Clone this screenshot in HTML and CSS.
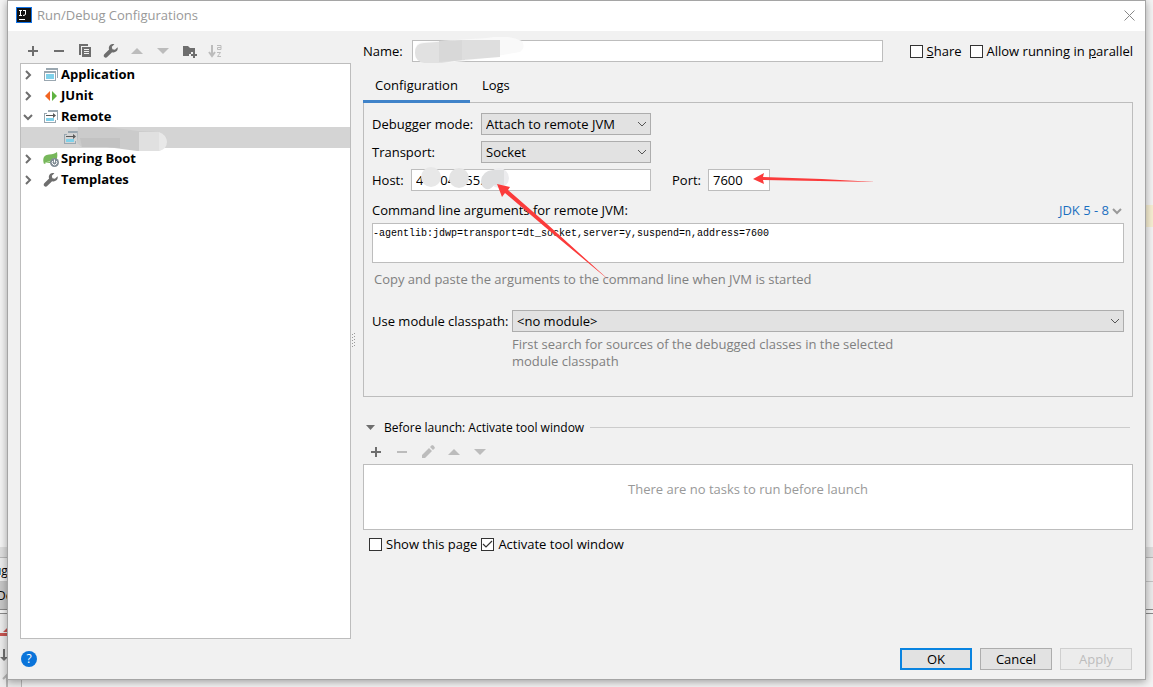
FILE: index.html
```html
<!DOCTYPE html>
<html lang="en">
<head>
  <meta charset="UTF-8">
  <meta name="viewport" content="width=device-width, initial-scale=1.0">
  <title>Run/Debug Configurations</title>
  <link rel="stylesheet" href="styles.css">
</head>
<body>
  <!-- shared icons -->
  <svg class="sprite" aria-hidden="true">
    <symbol id="i-plus" viewBox="0 0 16 16"><path d="M7 3h2v4h4v2H9v4H7V9H3V7h4z" fill="currentColor"/></symbol>
    <symbol id="i-minus" viewBox="0 0 16 16"><path d="M3 7h10v2H3z" fill="currentColor"/></symbol>
    <symbol id="i-up" viewBox="0 0 16 16"><path d="M2 11l6-6 6 6z" fill="currentColor"/></symbol>
    <symbol id="i-down" viewBox="0 0 16 16"><path d="M2 5h12l-6 6z" fill="currentColor"/></symbol>
    <symbol id="i-wrench" viewBox="0 0 16 16"><path d="M14.6 4.2l-2.7 2.6-2.5-.6-.6-2.4 2.6-2.6c-1.700-.6-3.700-.1-4.700 1.200-1 1.200-1.100 2.700-.6 4L1.300 11.200c-.8.8-.8 2.100 0 2.900s2.100.8 2.900 0l4.900-4.900c1.500.5 3.100.2 4.300-.9 1.200-1.100 1.600-2.700 1.200-4.100z" fill="currentColor"/></symbol>
    <symbol id="i-right" viewBox="0 0 10 10"><path d="M3 1l4 4-4 4" fill="none" stroke="currentColor" stroke-width="2"/></symbol>
    <symbol id="i-open" viewBox="0 0 10 10"><path d="M1 3l4 4 4-4" fill="none" stroke="currentColor" stroke-width="2"/></symbol>
    <symbol id="i-chevron" viewBox="0 0 10 10"><path d="M1 3l4 4 4-4" fill="none" stroke="currentColor" stroke-width="1"/></symbol>
    <symbol id="i-app" viewBox="0 0 16 16"><path d="M3 1h12v10h-1V3H3z" fill="#9aa7b0"/><path d="M1 4h12v10H1zm1 2v7h10V6z" fill="#9aa7b0" fill-rule="evenodd"/><path d="M3 7h8v5H3z" fill="#7fd1ea"/></symbol>
    <symbol id="i-remote" viewBox="0 0 16 16"><path d="M5 1h10v10h-1V3H5zM1 4h3v1H2v8h10v-2h1v3H1z" fill="#9aa7b0"/><path d="M3 9h8v3H3z" fill="#7fd1ea"/><path d="M3 6h7V4l3 2.500L10 9V7H3z" fill="#595959"/></symbol>
  </svg>

  <!-- editor window behind the dialog -->
  <div class="backdrop" aria-hidden="true">
    <div class="backdrop-editor"><div class="backdrop-line"></div></div>
    <div class="backdrop-split"></div>
    <div class="backdrop-tab">ug</div>
    <div class="backdrop-tab active">De</div>
    <div class="backdrop-rule"></div>
    <div class="backdrop-tools">
      <svg width="21" height="74" viewBox="0 0 21 74"><path d="M0 19h8v3H0zM3 18l5-5v5z" fill="#c75450"/><path d="M3 35h2v9H3zM0 43h8l-4 4z" fill="#6e6e6e"/><path d="M7 73V61m-4 4l4-4 4 4" stroke="#b5b5b5" stroke-width="2" fill="none"/></svg>
    </div>
  </div>

  <main class="dialog">
    <header class="titlebar">
      <svg width="16" height="16" viewBox="0 0 16 16"><path d="M0 0h16v16H0z" fill="#1374e8"/><path d="M1 1h14v14H1z" fill="#111"/><path d="M3 3.500h3M4.500 3v5M3 8.500h3M7 3.500h3M9.500 3v4q0 1.500-2.500 1.500" fill="none" stroke="#fff" stroke-width="1"/><path d="M3 12h6v1H3z" fill="#fff"/></svg>
      <h1>Run/Debug Configurations</h1>
      <button class="close" aria-label="Close"><svg width="11" height="11" viewBox="0 0 11 11"><path d="M.5.5l10 10m0-10l-10 10" stroke="#888" fill="none"/></svg></button>
    </header>

    <div class="content">
      <aside class="sidebar">
        <div class="toolbar">
          <button aria-label="Add"><svg><use href="#i-plus"/></svg></button>
          <button aria-label="Remove"><svg><use href="#i-minus"/></svg></button>
          <button aria-label="Copy"><svg viewBox="0 0 16 16"><path d="M2 1h9v2H4v9H2z" fill="#6e6e6e"/><path d="M5 4h9v10H5zm2 2v1h5V6zm0 2v1h5V8zm0 2v1h5v-1z" fill="#6e6e6e" fill-rule="evenodd"/></svg></button>
          <button aria-label="Edit templates"><svg><use href="#i-wrench"/></svg></button>
          <button aria-label="Move up" disabled><svg><use href="#i-up"/></svg></button>
          <button aria-label="Move down" disabled><svg><use href="#i-down"/></svg></button>
          <button aria-label="New folder"><svg viewBox="0 0 16 16"><path d="M2 3h5l2 2h5v4h-4v2H8v2H2z" fill="#6e6e6e"/><path d="M12 9h2v2h2v2h-2v2h-2v-2h-2v-2h2z" fill="#6e6e6e"/></svg></button>
          <button aria-label="Sort" disabled><svg viewBox="0 0 16 16"><path d="M5 2v10M2 9l3 4 3-4" stroke="currentColor" stroke-width="2" fill="none"/><path d="M10 2.500h4v4h-3.500V4.500H14M10 9.500h3.500l-3 4H14" stroke="currentColor" fill="none"/></svg></button>
        </div>
        <ul class="tree">
          <li><button class="toggle" aria-label="Expand Application"><svg><use href="#i-right"/></svg></button><svg class="icon"><use href="#i-app"/></svg>Application</li>
          <li><button class="toggle" aria-label="Expand JUnit"><svg><use href="#i-right"/></svg></button><svg class="icon" viewBox="0 0 16 16"><path d="M7 3v10L2 8z" fill="#f26522"/><path d="M9 3v10l5-5z" fill="#5fb341"/></svg>JUnit</li>
          <li><button class="toggle" aria-label="Collapse Remote"><svg><use href="#i-open"/></svg></button><svg class="icon"><use href="#i-remote"/></svg>Remote</li>
          <li class="child selected">
            <svg class="icon"><use href="#i-remote"/></svg>
            <svg class="smudge" width="92" height="25" viewBox="0 0 92 25"><path d="M0 16L1 0h30l30 4 21 1q9 4 8 10t-8 9H60L30 20H5z" fill="#cbcbcb"/><path d="M3 11h40v10L30 20H5z" fill="#c2c2c2"/><path d="M62 5h20v19H62z" fill="#e0e0e0"/><path d="M82 5q8 3 8 10t-8 9z" fill="#e8e8e8"/></svg>
          </li>
          <li><button class="toggle" aria-label="Expand Spring Boot"><svg><use href="#i-right"/></svg></button><svg class="icon" viewBox="0 0 16 16"><path d="M14 1c1 5 0 10-5 11H3l-2 1C-1 7 1 4 6 3.500c4-.2 6-1 8-2.500z" fill="#77b75b"/><path d="M2 12q6-1 9-5" stroke="#b8dda7" fill="none"/><circle cx="11.500" cy="11.500" r="4.500" fill="#7f8b94"/><path d="M11.500 8.500v3M9.800 10a2.300 2.300 0 1 0 3.400 0" stroke="#fff" fill="none"/></svg>Spring Boot</li>
          <li><button class="toggle" aria-label="Expand Templates"><svg><use href="#i-right"/></svg></button><svg class="icon"><use href="#i-wrench"/></svg>Templates</li>
        </ul>
      </aside>

      <div class="splitter">
        <svg width="5" height="15" viewBox="0 0 5 15"><path d="M1 2h1v1H1zM1 5h1v1H1zM1 8h1v1H1zM1 11h1v1H1zM1 14h1v1H1zM3 1h1v1H3zM3 4h1v1H3zM3 7h1v1H3zM3 10h1v1H3zM3 13h1v1H3z" fill="#999"/></svg>
      </div>

      <section class="editor">
        <div class="name-row">
          <label class="name-label" for="name">Name:</label>
          <div class="name-field">
            <input type="text" id="name">
            <svg class="smudge" width="114" height="27" viewBox="0 0 114 27"><path d="M3 15Q3 4 12 5L75 1q20-4 35 3 4 6-2 11l-23 4-31 5-24 2H15Q3 25 3 15z" fill="#f9f9f9"/><path d="M3 16Q3 6 12 6L50 3v20l-20 3H12Q3 24 3 16z" fill="#e1e1e1"/><path d="M27 4l26-1v20l-26 2z" fill="#d8d8d8"/><path d="M50 3h38v17l-38 3z" fill="#dedede"/></svg>
          </div>
          <label class="check"><input type="checkbox"><span><u>S</u>hare</span></label>
          <label class="check"><input type="checkbox"><span>Allow running in <u>p</u>arallel</span></label>
        </div>

        <nav class="tabs">
          <button class="tab active">Configuration</button>
          <button class="tab">Logs</button>
        </nav>

        <div class="panel">
          <div class="row">
            <label class="field-label" for="mode">Debugger mode:</label>
            <div class="select"><select id="mode"><option>Attach to remote JVM</option></select><svg><use href="#i-chevron"/></svg></div>
          </div>
          <div class="row">
            <label class="field-label" for="transport">Transport:</label>
            <div class="select"><select id="transport"><option>Socket</option></select><svg><use href="#i-chevron"/></svg></div>
          </div>
          <div class="row">
            <label class="host-label" for="host">Host:</label>
            <div class="host-field">
              <input type="text" id="host" value="4     04   55.">
              <svg class="smudge" width="100" height="26" viewBox="0 0 100 26"><circle cx="20" cy="11" r="10" fill="#e8e8e8"/><circle cx="48" cy="12" r="10" fill="#e4e4e4"/><circle cx="88" cy="12" r="10" fill="#ececee"/><path d="M70 15q1-10 12-11h11v15H83q-3 5-8 4-5-2-5-8z" fill="#dedfe0"/></svg>
            </div>
            <label class="port-label" for="port">Port:</label>
            <input class="port" type="text" id="port" value="7600">
          </div>
          <div class="args-head">
            <label for="args">Command line arguments for remote JVM:</label>
            <a href="#">JDK 5 - 8<svg><use href="#i-open"/></svg></a>
          </div>
          <textarea id="args" spellcheck="false">-agentlib:jdwp=transport=dt_socket,server=y,suspend=n,address=7600</textarea>
          <p class="hint">Copy and paste the arguments to the command line when JVM is started</p>
          <div class="module-row">
            <label for="module">Use module classpath:</label>
            <div class="select"><select id="module"><option>&lt;no module&gt;</option></select><svg><use href="#i-chevron"/></svg></div>
            <p class="hint">First search for sources of the debugged classes in the selected module classpath</p>
          </div>

          <!-- red pointers to the host and port fields -->
          <svg class="arrows" width="520" height="120" viewBox="0 0 520 120"><path d="M133 17l13 3-2 3 39 34 63 57-65-54-40-34-3 4z" fill="#fb3b3b"/><path d="M389 12l11-6-1 4 59 2 54 3-57-1-56-1 1 4z" fill="#fb3b3b"/></svg>
        </div>

        <div class="launch-head">
          <button class="fold" aria-label="Collapse"><svg viewBox="0 0 10 10"><path d="M0 2h9L4.500 7z" fill="#6e6e6e"/></svg></button>
          <h2>Before launch: Activate tool window</h2>
          <hr>
        </div>
        <div class="toolbar launch-tools">
          <button aria-label="Add task"><svg><use href="#i-plus"/></svg></button>
          <button aria-label="Remove task" disabled><svg><use href="#i-minus"/></svg></button>
          <button aria-label="Edit task" disabled><svg viewBox="0 0 16 16"><path d="M2 14v-3l7-7 3 3-7 7zM10 3l2-2q2 0 3 3l-2 2z" fill="currentColor"/></svg></button>
          <button aria-label="Move task up" disabled><svg><use href="#i-up"/></svg></button>
          <button aria-label="Move task down" disabled><svg><use href="#i-down"/></svg></button>
        </div>
        <div class="tasks">There are no tasks to run before launch</div>
        <div class="launch-options">
          <label class="check"><input type="checkbox"><span>Show this page</span></label>
          <label class="check"><input type="checkbox" checked><span>Activate tool window</span></label>
        </div>
      </section>
    </div>

    <footer class="footer">
      <button class="help" aria-label="Help">?</button>
      <button class="btn primary">OK</button>
      <button class="btn">Cancel</button>
      <button class="btn" disabled>Apply</button>
    </footer>
  </main>
</body>
</html>
```
FILE: styles.css
```css
* {
  margin: 0;
  padding: 0;
  box-sizing: border-box;
}

:root {
  --bg: #f1f1f1;
  --line: #bdbdbd;
  --icon: #6e6e6e;
  --icon-off: #bcbcbc;
  --blue: #0a84e0;
}

body {
  font-family: "Open Sans", "Noto Sans", sans-serif;
  font-size: 13px;
  line-height: 17px;
  color: #000;
  background: #f4f4f4;
  height: 100vh;
  padding: 0 7px 7px;
  overflow: hidden;
}

button,
input,
select,
textarea {
  font: inherit;
  color: inherit;
  border-radius: 0;
}

button {
  background: none;
  border: none;
}

.sprite {
  display: none;
}

/* window behind */
.backdrop {
  position: absolute;
  inset: 0;
  z-index: -1;
  display: flex;
  flex-direction: column;
  font-size: 12px;
  background: #f4f4f4;
}

.backdrop-editor {
  flex: 1;
  padding-top: 205px;
}

.backdrop-line {
  height: 22px;
  background: linear-gradient(to right, transparent 50%, #f7efd2 50%);
}

.backdrop-split {
  height: 11px;
  background: #dedede;
  border-bottom: 1px solid #b8b8b8;
}

.backdrop-tab {
  height: 24px;
  line-height: 26px;
  text-indent: -6px;
  background: #ececec;
  border-bottom: 1px solid #c4c4c4;
}

.backdrop-tab.active {
  height: 28px;
  line-height: 28px;
  text-indent: -3px;
  background: linear-gradient(to right, #c6c6c6 50%, #ececec 50%);
  border-bottom: 1px solid #8a8a8a;
}

.backdrop-rule {
  height: 4px;
  border-bottom: 1px solid #8a8a8a;
}

.backdrop-tools {
  width: 22px;
  height: 73px;
  background: #ececec;
  border-right: 1px solid #b8b8b8;
}

.dialog {
  height: 100%;
  display: flex;
  flex-direction: column;
  background: var(--bg);
  border: 1px solid #a5a5a5;
  box-shadow: 0 2px 8px rgba(0, 0, 0, 0.35);
}

.titlebar {
  height: 30px;
  display: flex;
  align-items: center;
  gap: 5px;
  padding: 0 10px 2px 8px;
  background: #fff;
}

.titlebar h1 {
  flex: 1;
  font-size: 13px;
  font-weight: 400;
  color: #999;
}

.titlebar svg,
.close svg {
  display: block;
}

.content {
  flex: 1;
  min-height: 0;
  display: flex;
  padding: 9px 12px 0;
}

/* left side */
.sidebar {
  width: 331px;
  display: flex;
  flex-direction: column;
}

.toolbar {
  display: flex;
  gap: 10px;
  height: 23px;
  padding: 3px 5px 0;
  color: var(--icon);
}

.toolbar button {
  width: 16px;
  height: 16px;
}

.toolbar button:disabled {
  color: var(--icon-off);
}

.toolbar svg {
  display: block;
  width: 16px;
  height: 16px;
}

.tree {
  flex: 1;
  list-style: none;
  font-weight: 700;
  background: #fff;
  border: 1px solid var(--line);
}

.tree li {
  position: relative;
  display: flex;
  align-items: center;
  height: 21px;
  padding-left: 2px;
}

.tree .child {
  padding-left: 42px;
}

.tree .selected {
  background: #d4d4d4;
}

.toggle,
.toggle svg {
  display: block;
  width: 10px;
  height: 10px;
  color: var(--icon);
}

.tree .icon {
  width: 16px;
  height: 16px;
  margin-right: 2px;
  color: var(--icon);
}

.toggle + .icon {
  margin-left: 10px;
}

.smudge {
  position: absolute;
  pointer-events: none;
}

.tree .smudge {
  left: 56px;
  top: 0;
}

.splitter {
  display: flex;
  align-items: center;
  width: 12px;
}

/* right side */
.editor {
  flex: 1;
  min-width: 0;
}

.name-row {
  display: flex;
  align-items: center;
}

.name-label {
  width: 49px;
}

input[type="text"] {
  display: block;
  width: 100%;
  height: 22px;
  padding: 0 4px;
  background: #fff;
  border: 1px solid var(--line);
}

.name-field {
  position: relative;
  flex: 1;
  margin-right: 27px;
}

.name-field .smudge {
  left: 0;
  top: -3px;
}

.check {
  display: flex;
  align-items: center;
  gap: 4px;
}

.check + .check {
  margin-left: 8px;
}

.check input {
  appearance: none;
  width: 13px;
  height: 13px;
  background: #fff;
  border: 1px solid #333;
}

.check input:checked {
  background: #fff url("data:image/svg+xml,%3Csvg xmlns='http://www.w3.org/2000/svg' viewBox='0 0 11 11'%3E%3Cpath d='M1 5l3 3 6-6' fill='none' stroke='%23333' stroke-width='1.2'/%3E%3C/svg%3E");
}

.tabs {
  position: relative;
  z-index: 1;
  display: flex;
  height: 41px;
  padding-top: 8px;
}

.tab {
  padding: 0 12px;
  border-bottom: 3px solid transparent;
}

.tab.active {
  border-color: #4083c9;
}

.panel {
  position: relative;
  height: 295px;
  margin-top: -1px;
  padding: 10px 8px;
  border: 1px solid var(--line);
}

.row {
  display: flex;
  align-items: center;
  margin-bottom: 6px;
}

.field-label {
  width: 109px;
}

.select {
  position: relative;
  width: 170px;
}

.select select {
  display: block;
  appearance: none;
  width: 100%;
  height: 22px;
  padding: 0 4px;
  background: #e2e2e2;
  border: 1px solid #adadad;
}

.select svg {
  position: absolute;
  right: 4px;
  top: 6px;
  width: 10px;
  height: 10px;
  color: #555;
  pointer-events: none;
}

.host-label {
  width: 39px;
}

.host-field {
  position: relative;
  width: 240px;
}

.host-field .smudge {
  left: 0;
  top: -3px;
}

.port-label {
  width: 36px;
  margin-left: 21px;
}

.panel .port {
  width: 62px;
}

.args-head {
  display: flex;
  justify-content: space-between;
  margin: 11px 0 4px;
}

.args-head a {
  display: flex;
  align-items: center;
  gap: 3px;
  padding-right: 2px;
  color: #1a6fc0;
  text-decoration: none;
}

.args-head svg {
  width: 10px;
  height: 10px;
  color: #999;
}

textarea {
  display: block;
  width: 100%;
  height: 40px;
  padding: 2px 0;
  border: 1px solid var(--line);
  background: #fff;
  resize: none;
}

.panel textarea {
  font-family: "Liberation Mono", monospace;
  font-size: 10px;
  line-height: 15px;
}

.hint {
  color: #808080;
}

textarea + .hint {
  margin: 8px 2px 22px;
}

.module-row {
  display: grid;
  grid-template-columns: 140px 1fr;
  align-items: center;
  gap: 4px 0;
}

.module-row .select {
  width: 100%;
}

.module-row .hint {
  grid-column: 2;
  max-width: 400px;
}

.arrows {
  position: absolute;
  left: 0;
  top: 64px;
  pointer-events: none;
}

.launch-head {
  display: flex;
  align-items: center;
  margin-top: 22px;
  padding: 0 3px;
}

.launch-head h2 {
  margin: 0 6px 0 8px;
  font-size: 12px;
  font-weight: 400;
}

.launch-head hr {
  flex: 1;
  border: none;
  border-top: 1px solid #ccc;
}

.fold,
.fold svg {
  display: block;
  width: 10px;
  height: 10px;
}

.launch-tools {
  height: 28px;
  padding-top: 8px;
}

.tasks {
  height: 66px;
  padding-top: 16px;
  text-align: center;
  color: #999;
  background: #fff;
  border: 1px solid var(--line);
}

.launch-options {
  display: flex;
  padding: 6px;
}

.launch-options .check + .check {
  margin-left: 4px;
}

/* bottom buttons */
.footer {
  display: flex;
  align-items: center;
  gap: 8px;
  padding: 9px 13px;
}

.help {
  width: 16px;
  height: 16px;
  margin-right: auto;
  border-radius: 50%;
  background: #0a74da;
  color: #fff;
  font-size: 12px;
  line-height: 16px;
}

.btn {
  width: 72px;
  height: 22px;
  background: #e2e2e2;
  border: 1px solid #adadad;
}

.btn.primary {
  border: 2px solid var(--blue);
}

.btn:disabled {
  background: #ececec;
  border-color: #cfcfcf;
  color: #bdbdbd;
}
```
